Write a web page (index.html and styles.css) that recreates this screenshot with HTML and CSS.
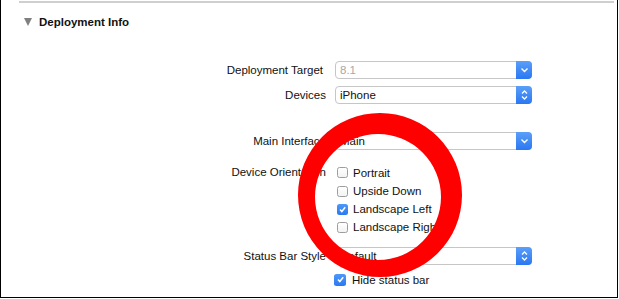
FILE: index.html
```html
<!DOCTYPE html>
<html>
<head>
<meta charset="utf-8">
<link rel="stylesheet" href="styles.css">
</head>
<body>
<div class="frame">
  <div class="topline"></div>
  <div class="header">
    <span class="disclosure"></span>
    <span class="title">Deployment Info</span>
  </div>
  <div class="form">
    <div class="row r-target">
      <div class="label">Deployment Target</div>
      <div class="select">
        <span class="value muted">8.1</span>
        <span class="btn"><svg width="9" height="6" viewBox="0 0 9 6"><path d="M1.5 1.5 L4.5 4.5 L7.5 1.5" fill="none" stroke="#fff" stroke-width="1.4"/></svg></span>
      </div>
    </div>
    <div class="row r-devices">
      <div class="label">Devices</div>
      <div class="select">
        <span class="value">iPhone</span>
        <span class="btn"><svg width="9" height="12" viewBox="0 0 9 12"><path d="M2 4.5 L4.5 2 L7 4.5 M2 7.5 L4.5 10 L7 7.5" fill="none" stroke="#fff" stroke-width="1.3"/></svg></span>
      </div>
    </div>
    <div class="row r-main">
      <div class="label">Main Interface</div>
      <div class="select">
        <span class="value">Main</span>
        <span class="btn"><svg width="9" height="6" viewBox="0 0 9 6"><path d="M1.5 1.5 L4.5 4.5 L7.5 1.5" fill="none" stroke="#fff" stroke-width="1.4"/></svg></span>
      </div>
    </div>
    <div class="row r-orient">
      <div class="label">Device Orientation</div>
      <div class="checks">
        <label class="check first"><span class="box"></span><span>Portrait</span></label>
        <label class="check"><span class="box"></span><span>Upside Down</span></label>
        <label class="check"><span class="box on"><svg width="9" height="9" viewBox="0 0 9 9"><path d="M2 4.6 L3.8 6.5 L7.2 2.2" fill="none" stroke="#fff" stroke-width="1.5"/></svg></span><span>Landscape Left</span></label>
        <label class="check"><span class="box"></span><span>Landscape Right</span></label>
      </div>
    </div>
    <div class="row r-status">
      <div class="label">Status Bar Style</div>
      <div class="select">
        <span class="value">Default</span>
        <span class="btn"><svg width="9" height="12" viewBox="0 0 9 12"><path d="M2 4.5 L4.5 2 L7 4.5 M2 7.5 L4.5 10 L7 7.5" fill="none" stroke="#fff" stroke-width="1.3"/></svg></span>
      </div>
    </div>
    <div class="row r-hide">
      <div class="label"></div>
      <label class="check hide"><span class="box on"><svg width="9" height="9" viewBox="0 0 9 9"><path d="M2 4.6 L3.8 6.5 L7.2 2.2" fill="none" stroke="#fff" stroke-width="1.5"/></svg></span><span>Hide status bar</span></label>
    </div>
  </div>
  <svg class="ring" width="619" height="299" viewBox="0 0 619 299">
    <path fill="#ff0000" fill-rule="evenodd" d="M298 195 A82 82 0 1 0 462 195 A82 82 0 1 0 298 195 Z M315 197 A63 63 0 1 0 441 197 A63 63 0 1 0 315 197 Z"/>
  </svg>
</div>
</body>
</html>
```

FILE: styles.css
```css
html, body {
  margin: 0;
  padding: 0;
  background: #fff;
}
body {
  font-family: "Liberation Sans", Arial, sans-serif;
  font-size: 11.5px;
  color: #111;
}
.frame {
  position: relative;
  width: 616px;
  height: 297px;
  border-left: 1px solid #000;
  border-right: 1px solid #000;
  border-bottom: 1px solid #000;
  overflow: hidden;
}
.topline {
  height: 2px;
  margin: 1px 3px 0 18px;
  background: #cfcfcf;
}
.header {
  display: flex;
  align-items: center;
  height: 14px;
  margin-top: 12px;
  padding-left: 23px;
}
.disclosure {
  width: 0;
  height: 0;
  border-left: 4.5px solid transparent;
  border-right: 4.5px solid transparent;
  border-top: 8px solid #808080;
  margin-right: 7px;
}
.title {
  font-weight: bold;
  color: #111;
  line-height: 14px;
}
.form {
  display: flex;
  flex-direction: column;
}
.row {
  display: flex;
  align-items: center;
}
.label {
  width: 325px;
  text-align: right;
  line-height: 18px;
  flex: none;
  margin-right: 9px;
}
.r-target { margin-top: 32px; }
.r-target .label { width: 322px; margin-right: 12px; }
.r-devices { margin-top: 7px; }
.r-main { margin-top: 28px; }
.r-orient { margin-top: 13px; align-items: flex-start; }
.r-orient .label { line-height: 19px; }
.r-status { margin-top: 11px; }
.r-hide { margin-top: 5px; }
.select {
  box-sizing: border-box;
  width: 197px;
  height: 18px;
  border: 1px solid #c6c6c6;
  border-radius: 4px;
  display: flex;
  align-items: center;
  background: #fff;
}
.value {
  padding-left: 4px;
  flex: 1;
  line-height: 16px;
}
.muted { color: #a8a8a8; }
.btn {
  flex: none;
  width: 16px;
  height: 18px;
  margin: -1px -1px -1px 0;
  border-radius: 0 4px 4px 0;
  background: linear-gradient(#5a9ff8, #2a77f2);
  display: flex;
  align-items: center;
  justify-content: center;
}
.checks {
  display: flex;
  flex-direction: column;
}
.check {
  display: flex;
  align-items: center;
  height: 18px;
}
.check.first { height: 19px; }
.box {
  box-sizing: border-box;
  width: 11px;
  height: 11px;
  margin-left: 2px;
  margin-right: 5px;
  border: 1px solid #9d9d9d;
  border-radius: 2.5px;
  background: linear-gradient(#fff, #f3f3f3);
  display: flex;
  align-items: center;
  justify-content: center;
}
.box.on {
  border: none;
  background: linear-gradient(#4e98f8, #2a78f2);
}
.hide { height: 19px; }
.hide .box {
  width: 12px;
  height: 12px;
  margin-left: -1px;
  margin-right: 6px;
}
.ring {
  position: absolute;
  left: -1px;
  top: 0;
  pointer-events: none;
}
```
